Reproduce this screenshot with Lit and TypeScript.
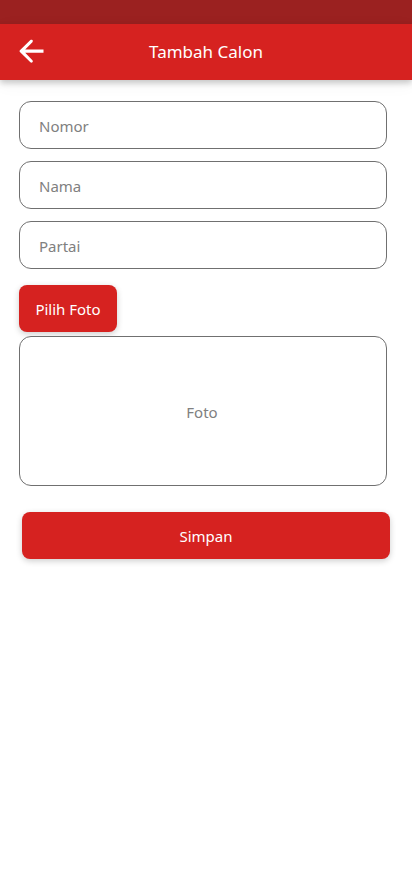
import { LitElement, html, css } from "lit";
import { customElement } from "lit/decorators.js";

@customElement("app-root")
export class AppRoot extends LitElement {
  static styles = css`
    :host {
      display: block;
      min-height: 100vh;
      background: #ffffff;
      font-family: "Noto Sans", "Open Sans", sans-serif;
      font-size: 15px;
      line-height: 22px;
    }
    * {
      box-sizing: border-box;
    }
    .status {
      height: 24px;
      background: #9b2120;
    }
    .bar {
      display: grid;
      grid-template-columns: 24px 1fr 24px;
      align-items: center;
      height: 56px;
      padding: 0 19px 2px;
      background: #d62220;
      color: #ffffff;
      box-shadow: 0 3px 6px rgba(0, 0, 0, 0.2), 0 4px 16px rgba(0, 0, 0, 0.05);
    }
    .back {
      display: flex;
      width: 24px;
      height: 24px;
      padding: 0;
      border: 0;
      background: none;
      color: inherit;
    }
    .back svg {
      overflow: visible;
    }
    .title {
      margin: 0;
      padding-top: 2px;
      font-size: 17px;
      font-weight: 400;
      line-height: 24px;
      text-align: center;
    }
    .form {
      display: flex;
      flex-direction: column;
      padding: 21px 22px 24px 19px;
    }
    .fields {
      display: flex;
      flex-direction: column;
      gap: 12px;
      margin-right: 3px;
    }
    .field {
      width: 100%;
      height: 48px;
      padding: 2px 19px 0;
      border: 1px solid #707070;
      border-radius: 12px;
      background: #ffffff;
      color: #333333;
      font: inherit;
    }
    .field::placeholder {
      color: #808080;
      opacity: 1;
    }
    .button {
      min-width: 98px;
      height: 47px;
      padding: 0 16px;
      border: 0;
      border-radius: 8px;
      background: #d62220;
      color: #ffffff;
      font: inherit;
      box-shadow: 0 2px 6px rgba(0, 0, 0, 0.2);
    }
    .pick {
      align-self: flex-start;
      margin: 16px 0 4px;
      white-space: nowrap;
    }
    .photo {
      display: flex;
      align-items: center;
      justify-content: center;
      height: 150px;
      margin-right: 3px;
      padding: 2px 2px 0 0;
      border: 1px solid #707070;
      border-radius: 12px;
      background: #ffffff;
      color: #808080;
    }
    .save {
      margin: 26px 0 0 3px;
    }
  `;

  render() {
    return html`
      <div class="status"></div>
      <header class="bar">
        <button class="back" type="button" aria-label="Kembali">
          <svg width="24" height="24" viewBox="0 0 24 24" aria-hidden="true">
            <path
              d="M24.5 10.5H6.2l7.2-7.3c.6-.7.6-1.4 0-2.1-.6-.6-1.4-.6-2 0L.9 11.2c-.5.5-.5 1.2 0 1.7l10.5 10.4c.6.6 1.4.6 2 0 .6-.7.6-1.4 0-2.1L6.2 13.7h18.3z"
              fill="currentColor"
            />
          </svg>
        </button>
        <h1 class="title">Tambah Calon</h1>
      </header>
      <form class="form">
        <div class="fields">
          ${["Nomor", "Nama", "Partai"].map(
            (name) => html`<input
              class="field"
              type="text"
              name=${name.toLowerCase()}
              placeholder=${name}
              aria-label=${name}
            />`
          )}
        </div>
        <button class="button pick" type="button">Pilih Foto</button>
        <div class="photo">Foto</div>
        <button class="button save" type="button">Simpan</button>
      </form>
    `;
  }
}
